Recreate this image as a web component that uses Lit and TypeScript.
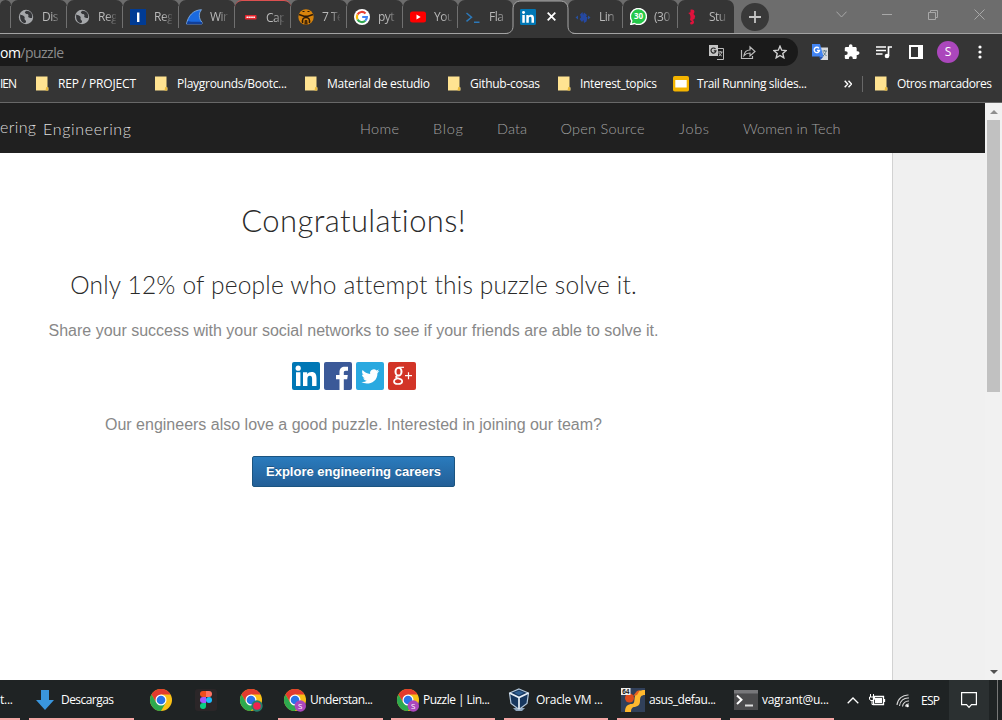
import { LitElement, html, css, svg } from "lit";
import { customElement } from "lit/decorators.js";

const icon = (w: number, h: number, body: unknown, vb = `0 0 ${w} ${h}`) =>
  html`<svg width=${w} height=${h} viewBox=${vb} fill="none">${body}</svg>`;

// A label whose tracking is adjusted so that it takes up the given width.
const label = (text: string, w: number) => html`<span class="fit" data-w=${w}>${text}</span>`;

const globe = icon(16, 16, svg`<circle cx="8" cy="8" r="7.2" fill="#a5a7aa"/>
  <path d="M2.2 5.5C4 6.500 5 6 6.300 7.600c1 1.300-.2 1.600.4 2.800.5 1 1.600 1 1.300 2.400l-.6 1.300C3.800 14 1.600 11 2.200 5.500ZM8.600 1.800c-1.800 1-2.300 1.600-1 2.800 1.200 1 2.300.2 2.800 1.500.4 1.300-1 1.600.5 2.500 1.200.6 2.500 0 3.100.5.9-3.600-1-7.200-5.400-7.300Z" fill="#36373a"/>`);
const blueI = icon(16, 16, svg`<rect width="16" height="16" fill="#003b94"/><rect x="7" y="3.500" width="2.400" height="9.500" fill="#fff"/>`);
const fin = icon(17, 16, svg`<path d="M.5 15C2 7 7 1 15.500.7 12.500 4 12.600 9.500 16 13.300v1.700Z" fill="#1a6ae0" stroke="#8db9ee" stroke-width=".8"/><path d="M.5 15.200 2 12c5 1.600 9 .3 14 1.200v2Z" fill="#123f98"/>`);
const redTag = icon(16, 16, svg`<rect x="3" y="6" width="11.500" height="4.500" rx=".8" fill="#e5262e"/><path d="M4.500 8.200h8.500" stroke="#fff" stroke-width="1.500" stroke-dasharray="1.500 .4"/>`);
const walrus = icon(16, 16, svg`<circle cx="8" cy="8" r="7.700" fill="#d8840c"/><g stroke="#2c1a08"><path d="m1 5.500 5 1.700h4l5-1.700" stroke-width="1.500"/><path d="M4.700 14c-.8-3.500.5-5.500 3.300-5.500s4.100 2 3.300 5.500" stroke-width="1.500"/><path d="M4.500 2.500h2M9.500 2.500h2" stroke-width="1"/></g><path d="M6.800 11h2.400l.5 4.500H6.300Z" fill="#4a2a06"/>`);
const google = icon(16, 16, svg`<circle cx="8" cy="8" r="8" fill="#fff"/><g stroke-width="2.200"><path d="M11.500 4.500A5 5 0 0 0 3.500 5.600" stroke="#ea4335"/><path d="M3.500 5.600A5 5 0 0 0 3.500 10.400" stroke="#fbbc05"/><path d="M3.500 10.400A5 5 0 0 0 11.300 11.700" stroke="#34a853"/><path d="M11.300 11.700A5 5 0 0 0 12.900 8H8.200" stroke="#4285f4"/></g>`);
const youtube = icon(16, 16, svg`<rect y="2.500" width="16" height="11" rx="2.500" fill="#f00"/><path d="m6.500 5.500 4.200 2.500-4.200 2.500Z" fill="#fff"/>`);
const prompt = icon(16, 16, svg`<path d="m1.500 4 5 4.200-5 4.200M9 13.200h5.500" stroke="#2c78b8" stroke-width="1.500"/>`);
const linkedin = (s: number) => icon(s, s, svg`<rect width="28" height="28" rx="2" fill="#0077b5"/><g fill="#fff"><circle cx="6.200" cy="6.200" r="2.600"/><path d="M4 10.300h4.400V24H4ZM11 10.300h4.200v1.900c.8-1.300 2.300-2.200 4.300-2.200 4.100 0 5 2.600 5 6.300V24h-4.400v-7c0-1.800-.3-3.300-2.200-3.300s-2.500 1.500-2.500 3.200V24H11Z"/></g>`, "0 0 28 28");
const diamond = icon(16, 16, svg`<path d="m.5 8.500 2.500-2v4ZM15.500 8.500 13 6.500v4Z" fill="#27509f"/><path d="M5 5.500 7.500 3 8 6l1-2.500L12 6l-1 1.500 1.500 1-1 4L9 14l-.5-3L7 13l-2.500-3L6 8.500Z" fill="#2548a0"/>`);
const whatsapp = icon(17, 17, svg`<path d="M8.500.5a8 8 0 1 1-4 15l-3.800 1 1.100-3.600A8 8 0 0 1 8.500.5Z" fill="#25c84a" stroke="#fff" stroke-width="1.400"/><text x="8.500" y="11.300" text-anchor="middle" font-family="Open Sans,sans-serif" font-size="8" font-weight="700" fill="#fff">30</text>`);
const seahorse = icon(14, 16, svg`<path d="M5.500.8C8 0 10 1.500 9.300 3.500L8.500 5l1.700 2-.7 3-2 1c2.300.5 2 4.500-.8 4.500-1.900 0-2.200-2.200-.7-2.500l1-.5-2-1.500L5.500 8 5 5.500 3.200 4l2.300-.7Z" fill="#e0123c"/>`);

const tabs: [unknown, string, number, boolean?][] = [
  [globe, "Dis", 56], [globe, "Reg", 56], [blueI, "Reg", 56], [fin, "Wir", 56], [redTag, "Cap", 56, true],
  [walrus, "7 Te", 56], [google, "pyt", 56], [youtube, "You", 55], [prompt, "Fla", 55],
];
const tabs2: [unknown, string, number][] = [[diamond, "Lin", 55], [whatsapp, "(30", 55], [seahorse, "Stu", 56]];

const folder = icon(13, 15, svg`<path d="M0 .5h11.500V11l1 .5v3H0Z" fill="#ffe391"/><path d="M12 11v3.500H9.500L10.300 11Z" fill="#e9b93c"/>`);
const slides = icon(16, 16, svg`<rect width="16" height="15.500" rx="1.800" fill="#f4b400"/><rect x="2.300" y="4" width="11.400" height="7.500" fill="#fff"/>`);

const chrome = (badge?: "s" | "r") => icon(badge === "s" ? 23 : 26, 24, svg`
  <circle cx="12" cy="12" r="11" fill="#fbc116"/>
  <path d="M2.470 6.500A11 11 0 0 1 21.530 6.500H12L7.240 14.750Z" fill="#e33b2e"/>
  <path d="M2.470 6.500A11 11 0 0 0 12 23L16.760 14.750H7.240Z" fill="#2da94f"/>
  <circle cx="12" cy="12" r="5.500" fill="#fff"/><circle cx="12" cy="12" r="4.300" fill="#2a73e8"/>
  ${badge === "s" ? svg`<circle cx="17.300" cy="18" r="5.700" fill="#ab47bc"/><text x="17.300" y="21" text-anchor="middle" font-family="Open Sans,sans-serif" font-size="8" fill="#fff">S</text>` : ""}
  ${badge === "r" ? svg`<circle cx="18" cy="18" r="5.700" fill="#24806d"/><circle cx="18" cy="18" r="3.800" fill="#f0234f"/>` : ""}`);
const arrow = icon(18, 20, svg`<path d="M5 0h8v10h5l-9 10L0 10h5Z" fill="#3a96dd"/>`);
const figma = icon(22, 22, svg`<rect width="22" height="22" rx="3" fill="#2b2628"/><g transform="translate(5 2)"><path d="M6 0H3a3 3 0 0 0 0 6h3Z" fill="#f24e1e"/><path d="M6 0h3a3 3 0 0 1 0 6H6Z" fill="#ff7262"/><path d="M6 6H3a3 3 0 0 0 0 6h3Z" fill="#a259ff"/><circle cx="9" cy="9" r="3" fill="#1abcfe"/><path d="M6 12H3a3 3 0 1 0 3 3Z" fill="#0acf83"/></g>`);
const vbox = icon(25, 24, svg`<path d="M5 20h12l-3 3H8Z" fill="#8ea6bd"/><path d="m11 1 9.500 4L19 15.500l-8 6-8-6L1.500 5Z" fill="#17375e" stroke="#b4c8dc" stroke-width="1.200"/><path d="M1.500 5 11 9.500 20.500 5M11 9.500V21" stroke="#e8f0f8" stroke-width="1.700"/><path d="m6 4.800 5-2 5 2-5 2.400Z" fill="#2f5f92"/>`);
const putty = icon(24, 24, svg`<rect width="24" height="24" fill="#31405a"/><path d="M4 24c0-6 3-8 7-8 3 0 2-4 3-8s4-6 10-6v5c-4 0-5 2-5 6s-2 5-5 6c-3 0-4 2-4 5Z" fill="#ffb82e"/><circle cx="8.500" cy="10" r="4.500" fill="#dd4a1c"/><path d="m12 8 4-5 3-1-3 5Z" fill="#e7601f"/><rect width="9.500" height="7" fill="#eee"/><text x="4.800" y="6.200" text-anchor="middle" font-family="Liberation Sans,sans-serif" font-size="6.500" font-weight="700" fill="#111">64</text>`);
const terminal = icon(24, 20, svg`<rect width="24" height="20" fill="#4b4b4d"/><rect width="24" height="3.500" fill="#77777a"/><path d="m3 5.500 4.500 4.200L3 14" stroke="#fff" stroke-width="2"/><path d="M11 15.500h8" stroke="#ddd" stroke-width="2"/>`);

// [left gap, width, icon, text, text width, has a running underline]
const tasks: [number, number, unknown, string, number, boolean][] = [
  [0, 20, "", "t...", 13, true],
  [9, 105, arrow, "Descargas", 53, true],
  [15, 24, chrome(), "", 0, false],
  [22, 22, figma, "", 0, false],
  [22, 26, chrome("r"), "", 0, false],
  [13, 105, chrome("s"), "Understan...", 63, true],
  [8, 104, chrome("s"), "Puzzle | Lin...", 67, true],
  [9, 104, vbox, "Oracle VM ...", 67, true],
  [9, 104, putty, "asus_defau...", 67, true],
  [9, 104, terminal, "vagrant@u...", 67, true],
];

@customElement("app-root")
export class AppRoot extends LitElement {
  static styles = css`
    :host { display: flex; flex-direction: column; width: 1002px; height: 720px; overflow: hidden; background: #fff; font: 12px "Open Sans", "Noto Sans", sans-serif; color: #fff; }
    * { box-sizing: border-box; }
    svg { display: block; flex: none; }
    .fit { white-space: nowrap; display: inline-block; justify-self: start; }
    .strip { height: 34px; background: #6d6d6d; display: flex; border-bottom: 1px solid #a3a3a3; flex: none; }
    .tab { height: 33px; background: #353535; border-radius: 7px 7px 0 0; display: flex; align-items: center; padding-left: 7px; overflow: hidden; flex: none; }
    .tab.alert { border-top: 1px solid #dc5050; }
    .tab .name { margin-left: 8px; width: 18px; overflow: hidden; white-space: nowrap; color: #b9b9b9; letter-spacing: -.5px; -webkit-mask-image: linear-gradient(90deg, #000 50%, rgba(0, 0, 0, .15)); mask-image: linear-gradient(90deg, #000 50%, rgba(0, 0, 0, .15)); }
    .tab .glyph { width: 16px; }
    .sep { width: 1px; height: 22px; background: #707070; margin-left: auto; }
    .stub { width: 11px; padding: 0; }
    .active { width: 55px; height: 34px; position: relative; display: flex; align-items: center; padding: 0 0 1px 7px; gap: 11px; flex: none; }
    .active > * { position: relative; }
    .active .outline { position: absolute; left: -8px; top: 0; }
    .plus { width: 28px; height: 28px; border-radius: 50%; background: #393939; margin: 3px 0 0 7px; display: grid; place-items: center; }
    .win { margin-left: auto; display: flex; height: 29px; align-items: center; }
    .win > * { width: 46px; display: grid; place-items: center; }
    .tools { height: 36px; background: #353535; padding-top: 4px; display: flex; flex: none; }
    .url { height: 28px; width: 798px; background: #1a1a1a; border-radius: 0 14px 14px 0; display: flex; align-items: center; font-size: 14px; color: #8b8b8b; padding-right: 2px; }
    .url b { font-weight: 400; color: #fff; }
    .url .acts { margin-left: auto; display: flex; }
    .acts > *, .exts > * { width: 32px; display: grid; place-items: center; }
    .exts { display: flex; align-items: center; height: 28px; padding-left: 6px; }
    .avatar { width: 22px; height: 22px; border-radius: 50%; background: #ab47bc; font-size: 12px; text-align: center; line-height: 22px; }
    .marks { height: 33px; background: #353535; border-bottom: 1px solid #686868; display: grid; flex: none; grid-template-columns: 36px 119px 150px 143px 110px 115px 171px 13px 18px 127px; align-items: center; padding-bottom: 5px; }
    .mark { display: flex; align-items: center; gap: 9px; }
    .mark.wide { gap: 8px; }
    .view { height: 577px; display: flex; flex: none; }
    .page { width: 985px; background: #f0f0f0; }
    .nav { height: 50px; background: #202020; display: flex; font-family: Lato, sans-serif; line-height: 50px; align-items: flex-start; }
    .brand { font-size: 16px; color: #dedede; width: 360px; display: flex; gap: 7px; font-weight: 300; padding-top: 1px; }
    .raised { line-height: 46px; }
    .links { display: grid; grid-template-columns: 73px 64px 63.500px 118.500px 64px 98px; font-size: 14.500px; font-weight: 300; color: #a2a2a2; padding-top: 1px; }
    .panel { width: 893px; height: 527px; background: #fff; border-right: 1px solid #d2d2d2; padding: 47px 185px 0 0; display: flex; flex-direction: column; align-items: center; }
    .panel h1, .panel h2, .panel p { margin: 0; }
    .panel h1 { font: 300 31px/40px Lato, sans-serif; color: #2a2a2a; }
    .panel h2 { font: 300 24.500px/32px Lato, sans-serif; color: #2a2a2a; margin-top: 29px; }
    .panel p { font: 16px/24px "Liberation Sans", Arial, sans-serif; color: #888; margin-top: 18px; }
    .social { display: flex; gap: 4px; margin-top: 19px; }
    .panel p.join { margin-top: 23px; }
    .cta { margin-top: 19px; width: 203px; height: 31px; border: 1px solid #1b5480; border-radius: 2px; background: linear-gradient(#2a7bbd, #235f97); color: #fff; font: 700 13px "Liberation Sans", Arial, sans-serif; padding: 0; text-shadow: 0 -1px 0 rgba(0, 0, 0, .25); }
    .scroll { width: 17px; background: #f1f1f1; display: flex; flex-direction: column; align-items: center; padding: 7px 0 6px; }
    .thumb { width: 13px; height: 272px; background: #c1c1c1; margin: 6px 0 auto; }
    .bar { height: 40px; background: #1f2324; display: flex; flex: none; align-items: stretch; }
    .task { display: flex; align-items: center; flex: none; white-space: nowrap; }
    .task.run { border-bottom: 2px solid #f4a5a4; padding-top: 1px; }
    .task .pic { width: 32px; display: grid; place-items: center; flex: none; }
    .tray { display: flex; align-items: center; margin-left: 13px; }
    .tray .bell { width: 40px; height: 40px; background: #2b3031; display: grid; place-items: center; margin-left: 9px; }
    .tray .gap { width: 10px; }
    .edge { width: 1px; height: 40px; background: #777; margin-left: 8px; }
  `;

  firstUpdated() {
    this.renderRoot.querySelectorAll<HTMLElement>(".fit").forEach((el) => {
      const n = (el.textContent ?? "").length;
      if (n < 2) return;
      const spacing = (Number(el.dataset.w) - el.getBoundingClientRect().width) / (n - 1);
      el.style.letterSpacing = `${spacing.toFixed(3)}px`;
      el.style.marginRight = `${(-spacing).toFixed(3)}px`;
    });
  }

  tab([pic, name, w, alert]: [unknown, string, number, boolean?]) {
    return html`<div class="tab ${alert ? "alert" : ""}" style="width:${w}px"><div class="glyph">${pic}</div><div class="name">${name}</div>${name === "Stu" || name === "Fla" ? "" : html`<div class="sep"></div>`}</div>`;
  }

  mark(text: string, w: number, pic: unknown = folder, wide = false) {
    return html`<div class="mark ${wide ? "wide" : ""}">${pic}${label(text, w)}</div>`;
  }

  render() {
    return html`
      <div class="strip">
        <div class="tab stub"><div class="sep"></div></div>
        ${tabs.map((t) => this.tab(t))}
        <div class="active">
          <div class="outline">${icon(71, 34, svg`<path d="M0 34C5 34 8 31 8 26V9c0-5 3-8 8-8h39c5 0 8 3 8 8v17c0 5 3 8 8 8Z" fill="#353535"/><path d="M0 33.500C5 33.500 8 31 8 26V9c0-5 3-8 8-8h39c5 0 8 3 8 8v17c0 5 3 7.500 8 7.500" stroke="#a8a8a8"/>`)}</div>
          ${linkedin(16)}
          ${icon(9, 9, svg`<path d="m.7.7 7.600 7.600m0-7.600L.7 8.300" stroke="#fff" stroke-width="1.800"/>`)}
        </div>
        ${tabs2.map((t) => this.tab(t))}
        <div class="plus">${icon(12, 12, svg`<path d="M6 0v12M0 6h12" stroke="#c4c4c4" stroke-width="1.800"/>`)}</div>
        <div class="win">
          <div>${icon(11, 7, svg`<path d="m.5.7 5 5.300 5-5.300" stroke="#a8a8a8"/>`)}</div>
          <div>${icon(10, 1, svg`<path d="M0 .5h10" stroke="#a8a8a8"/>`)}</div>
          <div>${icon(10, 10, svg`<path d="M.5 2.500h7v7h-7ZM2.500 2.500v-2h7v7h-2" stroke="#a8a8a8"/>`)}</div>
          <div>${icon(11, 11, svg`<path d="m.5.5 10 10m0-10-10 10" stroke="#a8a8a8"/>`)}</div>
        </div>
      </div>

      <div class="tools">
        <div class="url"><span class="fit" data-w="64"><b>om</b>/puzzle</span>
          <div class="acts">
            <div>${icon(15, 15, svg`<path d="M6 3.500h8.500v11H8" stroke="#bbb"/><rect width="9" height="11" fill="#c4c4c4"/><path d="M6.500 4A2.500 2.500 0 1 0 7 5.800H4.800" stroke="#222" stroke-width="1.200"/><path d="M9 7h4.500M11.200 6v1M12.800 7c-.5 2-1.500 3-3 4M9.800 8c.8 1.500 1.800 2.500 3 3" stroke="#bbb"/>`)}</div>
            <div>${icon(16, 15, svg`<path d="M1.500 5v8.500h11V11" stroke="#bbb" stroke-width="1.200"/><path d="M4 10.500C4.500 7 6.500 5 10 5V1.800l5 4.700-5 4.500V8C7.500 8 5.500 8.800 4 10.500Z" stroke="#bbb" stroke-width="1.200"/>`)}</div>
            <div>${icon(14, 14, svg`<path d="m7 1.200 1.700 4 4.400.4-3.300 2.900 1 4.300L7 10.500l-3.800 2.300 1-4.300L.9 5.600l4.400-.4Z" stroke="#d0d0d0" stroke-width="1.400"/>`)}</div>
          </div>
        </div>
        <div class="exts">
          <div>${icon(16, 16, svg`<path d="M6 3.500h10V16H8.500Z" fill="#d8dadd"/><path d="M0 0h8l3.500 12.500H0Z" fill="#4285f4"/><path d="m8.500 16 3-3.500H7Z" fill="#2457b8"/><path d="M7 4.300A2.700 2.700 0 1 0 7.500 6.500H5" stroke="#fff" stroke-width="1.300"/><path d="M10.500 7h4.500M12.500 6v1M14 7c-.5 2.500-1.500 3.500-3 5M11.500 8.500c1 1.500 2 2.500 3 3.500" stroke="#607d8b"/>`)}</div>
          <div>${icon(16, 16, svg`<path d="M13.700 7.300h-1V4.500c0-.8-.6-1.400-1.400-1.400H8.500v-1a1.800 1.800 0 0 0-3.600 0v1H2.200C1.400 3.100.8 3.700.8 4.500v2.700h1a1.900 1.900 0 0 1 0 3.800h-1v2.700c0 .8.600 1.400 1.400 1.400h2.700v-1a1.900 1.900 0 0 1 3.800 0v1h2.600c.8 0 1.400-.6 1.400-1.400v-2.800h1a1.800 1.800 0 0 0 0-3.600Z" fill="#fff"/>`)}</div>
          <div>${icon(16, 14, svg`<path d="M0 2h10M0 5.500h10M0 9h6.500M12.500 11V2H16" stroke="#fff" stroke-width="1.700"/><circle cx="11" cy="11" r="2.300" fill="#fff"/>`)}</div>
          <div>${icon(14, 14, svg`<path d="M1 1h12v12H1Z" stroke="#fff" stroke-width="2"/><path d="M9 1h4v12H9Z" fill="#fff"/>`)}</div>
          <div><div class="avatar">S</div></div>
          <div>${icon(4, 14, svg`<g fill="#fff"><circle cx="2" cy="2" r="1.600"/><circle cx="2" cy="7" r="1.600"/><circle cx="2" cy="12" r="1.600"/></g>`)}</div>
        </div>
      </div>

      <div class="marks">
        ${label("IEN", 17)}
        ${this.mark("REP / PROJECT", 78)}
        ${this.mark("Playgrounds/Bootc...", 110)}
        ${this.mark("Material de estudio", 103)}
        ${this.mark("Github-cosas", 70)}
        ${this.mark("Interest_topics", 77)}
        ${this.mark("Trail Running slides...", 110, slides, true)}
        ${icon(8, 8, svg`<path d="m.7.7 3 3.300-3 3.300M4.500.7l3 3.300-3 3.300" stroke="#fff" stroke-width="1.400"/>`)}
        ${icon(12, 16, svg`<path d="M5.500 0v16" stroke="#686868"/>`)}
        ${this.mark("Otros marcadores", 95)}
      </div>

      <div class="view">
        <div class="page">
          <div class="nav">
            <div class="brand"><span class="raised">${label("ering", 36)}</span>${label("Engineering", 88)}</div>
            <div class="links">
              <span>${label("Home", 39)}</span><span>${label("Blog", 30)}</span><span>${label("Data", 30)}</span>
              <span>${label("Open Source", 84)}</span><span>${label("Jobs", 30)}</span><span>${label("Women in Tech", 97.5)}</span>
            </div>
          </div>
          <div class="panel">
            <h1>${label("Congratulations!", 225)}</h1>
            <h2>${label("Only 12% of people who attempt this puzzle solve it.", 566)}</h2>
            <p>${label("Share your success with your social networks to see if your friends are able to solve it.", 610)}</p>
            <div class="social">
              ${linkedin(28)}
              ${icon(28, 28, svg`<rect width="28" height="28" rx="2" fill="#3b5998"/><path d="M15.500 28V17.300H12v-4.200h3.500V10c0-3.400 2.200-5.200 5.200-5.200H24v3.900h-2.200c-1.700 0-2 .8-2 2v2.400h4l-.6 4.200h-3.400V28Z" fill="#fff"/>`)}
              ${icon(28, 28, svg`<rect width="28" height="28" rx="2" fill="#2aa9e0"/><path d="M23.300 9c-.7.300-1.400.5-2.100.6.800-.5 1.300-1.200 1.600-2-.7.400-1.500.7-2.300.9a3.700 3.700 0 0 0-6.300 3.400c-3-.2-5.800-1.600-7.600-3.900-1 1.700-.5 3.800 1.100 4.900-.6 0-1.200-.2-1.700-.4 0 1.800 1.300 3.300 3 3.700-.6.100-1.100.1-1.700 0 .5 1.500 1.900 2.500 3.500 2.600A7.400 7.400 0 0 1 5.400 20c5 3.200 16.100 1.500 16.100-9.100.7-.5 1.400-1.200 1.800-1.900Z" fill="#fff"/>`)}
              ${icon(28, 28, svg`<rect width="28" height="28" rx="2" fill="#d23427"/><g stroke="#fff"><ellipse cx="10.500" cy="9.700" rx="3" ry="3.900" stroke-width="2"/><path d="M11 5.300h5" stroke-width="1.200"/><path d="M10 13.500c-2.800.8-2.800 2.200.2 2.800 5.800 1.200 4.800 5.700-.2 5.700-5.500 0-5-4.800-.5-5.500" stroke-width="1.700"/><path d="M20.500 10.200v7M17 13.700h7" stroke-width="1.200"/></g>`)}
            </div>
            <p class="join">${label("Our engineers also love a good puzzle. Interested in joining our team?", 497)}</p>
            <button class="cta">${label("Explore engineering careers", 175)}</button>
          </div>
        </div>
        <div class="scroll">
          ${icon(8, 4, svg`<path d="m0 4 4-4 4 4Z" fill="#8f8f8f"/>`)}
          <div class="thumb"></div>
          ${icon(8, 4, svg`<path d="m0 0 4 4 4-4Z" fill="#505050"/>`)}
        </div>
      </div>

      <div class="bar">
        ${tasks.map(([gap, w, pic, text, tw, run]) => html`<div class="task ${run ? "run" : ""}" style="width:${w}px;margin-left:${gap}px">
          ${text ? html`${pic ? html`<div class="pic">${pic}</div>` : ""}${label(text, tw)}` : pic}</div>`)}
        <div class="tray">
          ${icon(12, 7, svg`<path d="m.7 6.300 5.300-5.300 5.300 5.300" stroke="#fff" stroke-width="1.300"/>`)}
          ${icon(37, 14, svg`<path d="M14.500 3.500h10v8h-10ZM25.500 6v3" stroke="#fff" stroke-width="1.300"/><path d="M16 5h7v5h-7Z" fill="#fff"/><path d="M11.500 1v3M14.500 1v3M10.500 4h5v2l-1 1.500h-3L10.500 6ZM13 8v3.500h1.500" stroke="#fff"/>`)}
          ${icon(15, 15, svg`<path d="M1 12A11 11 0 0 1 12.500 2M3.500 13A8.500 8.500 0 0 1 13 5M6.500 13.500A6 6 0 0 1 13 8M9.500 13.500A3 3 0 0 1 13 11" stroke="#d8d8d8" stroke-width="1.100"/><circle cx="11.500" cy="13" r="1.300" fill="#fff"/>`)}
          <span class="gap"></span>${label("ESP", 19)}
          <div class="bell">${icon(16, 17, svg`<path d="M.6.6h14.800v12H10.500L8 15.300 5.500 12.600H.6Z" stroke="#fff" stroke-width="1.200"/>`)}</div>
          <div class="edge"></div>
        </div>
      </div>`;
  }
}
